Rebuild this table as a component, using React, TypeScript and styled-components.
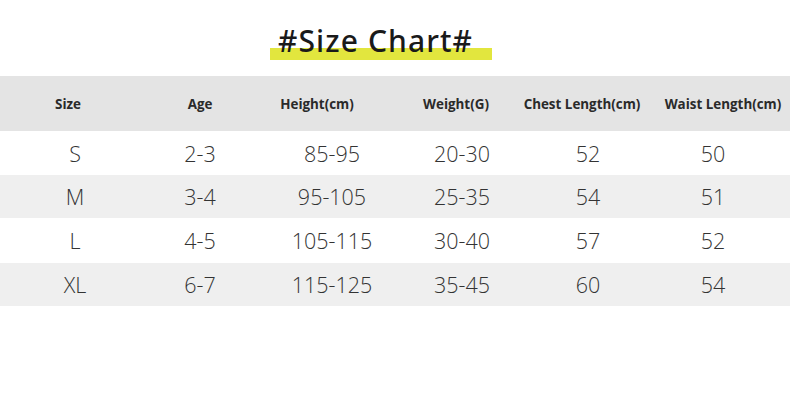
import styled, { createGlobalStyle } from "styled-components";

const GlobalStyle = createGlobalStyle`
	body {
		margin: 0;
		background: #fff;
		font-family: "Open Sans", "Noto Sans", sans-serif;
		color: #333;
	}
`;

const Page = styled.div`
	width: 790px;
	height: 414px;
	overflow: hidden;
	background: #fff;
`;

const TitleRow = styled.div`
	height: 76px;
	display: flex;
	align-items: flex-start;
	padding-left: 270px;
	padding-top: 22px;
	box-sizing: border-box;
`;

const Title = styled.h1`
	margin: 0;
	display: inline-block;
	width: 222px;
	box-sizing: border-box;
	padding: 0 0 0 8px;
	font-family: "Noto Sans", "Open Sans", sans-serif;
	font-size: 30px;
	line-height: 38px;
	font-weight: 500;
	letter-spacing: 1.1px;
	white-space: nowrap;
	color: #1a1a1a;
	background: linear-gradient(to bottom, transparent 68%, #e2e63e 68%, #e2e63e 100%);
`;

const HEAD_COLS = "136px 128px 106px 172px 80px 202px";
const BODY_COLS = "150px 100px 164px 96px 156px 94px";

const Row = styled.div<{ $cols: string; $height: number; $bg: string }>`
	display: grid;
	grid-template-columns: ${props => props.$cols};
	height: ${props => props.$height}px;
	background: ${props => props.$bg};
	align-items: center;
`;

const HeadCell = styled.div`
	display: flex;
	justify-content: center;
	white-space: nowrap;
	font-size: 13.4px;
	font-weight: 700;
	color: #2a2a2a;
`;

const Cell = styled.div`
	display: flex;
	justify-content: center;
	white-space: nowrap;
	font-size: 21.5px;
	font-weight: 300;
	color: #333;
`;

const headers = ["Size", "Age", "Height(cm)", "Weight(G)", "Chest Length(cm)", "Waist Length(cm)"];

const rows = [
	{ h: 44, cells: ["S", "2-3", "85-95", "20-30", "52", "50"] },
	{ h: 43, cells: ["M", "3-4", "95-105", "25-35", "54", "51"] },
	{ h: 45, cells: ["L", "4-5", "105-115", "30-40", "57", "52"] },
	{ h: 43, cells: ["XL", "6-7", "115-125", "35-45", "60", "54"] },
];

function App() {
	return (
		<Page>
			<GlobalStyle />
			<TitleRow>
				<Title>#Size Chart#</Title>
			</TitleRow>
			<Row $cols={HEAD_COLS} $height={55} $bg="#e4e4e4">
				{headers.map(h => (
					<HeadCell key={h}>{h}</HeadCell>
				))}
			</Row>
			{rows.map((r, i) => (
				<Row key={r.cells[0]} $cols={BODY_COLS} $height={r.h} $bg={i % 2 ? "#efefef" : "#fff"}>
					{r.cells.map((c, j) => (
						<Cell key={j}>{c}</Cell>
					))}
				</Row>
			))}
		</Page>
	);
}

export default App;
